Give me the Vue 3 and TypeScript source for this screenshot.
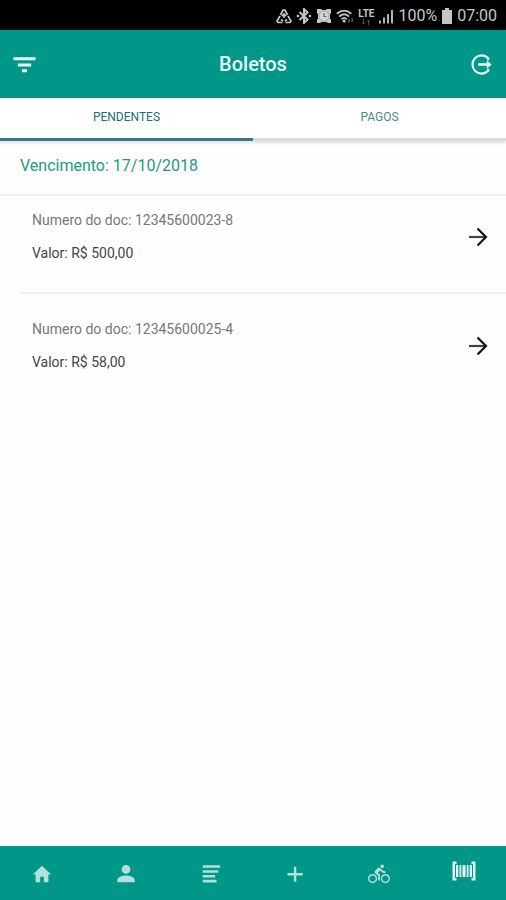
<script setup lang="ts">
import { ref } from 'vue'

interface Boleto {
  doc: string
  valor: string
}

interface NavItem {
  id: string
  label: string
  path: string
}

const activeTab = ref<'pendentes' | 'pagos'>('pendentes')
const activeNav = ref('boletos')

const boletos: Boleto[] = [
  { doc: '12345600023-8', valor: '500,00' },
  { doc: '12345600025-4', valor: '58,00' },
]

const navItems: NavItem[] = [
  { id: 'inicio', label: 'Início', path: 'M10 21v-6h4v6h5v-8.500h3L12 3 2 12.500h3V21z' },
  {
    id: 'perfil',
    label: 'Perfil',
    path: 'M12 11.800a4.800 4.800 0 1 0 0-9.600 4.800 4.800 0 0 0 0 9.600zM2.500 21v-2.500c0-3.300 6.300-4.900 9.500-4.900s9.500 1.600 9.500 4.900V21z',
  },
  { id: 'avisos', label: 'Avisos', path: 'M3 2.500h19v2.800H3zM3 7.800h17v2.800H3zM3 13.100h13.500v2.800H3zM3 18.400h15v2.800H3z' },
  { id: 'adicionar', label: 'Adicionar', path: 'M10.800 4h2.600v6.900h7v2.600h-7v7h-2.600v-7h-7v-2.600h7z' },
  {
    id: 'bicicletas',
    label: 'Bicicletas',
    path: 'M15.500 5.500c1.100 0 2-.9 2-2s-.9-2-2-2-2 .9-2 2 .9 2 2 2zM5 12c-2.800 0-5 2.200-5 5s2.200 5 5 5 5-2.200 5-5-2.200-5-5-5zm0 8.500c-1.900 0-3.500-1.600-3.500-3.500s1.600-3.500 3.500-3.500 3.500 1.600 3.500 3.500-1.600 3.500-3.500 3.500zm5.800-10l2.400-2.400.8.800c1.300 1.300 3 2.100 5.100 2.100V9c-1.500 0-2.700-.6-3.600-1.500l-1.900-1.900c-.5-.4-1-.6-1.600-.6s-1.100.2-1.400.6L7.800 8.400c-.4.4-.6.9-.6 1.400 0 .6.2 1.100.6 1.400L11 14v5h2v-6.200l-2.200-2.300zM19 12c-2.800 0-5 2.200-5 5s2.200 5 5 5 5-2.200 5-5-2.200-5-5-5zm0 8.500c-1.900 0-3.500-1.600-3.500-3.500s1.600-3.500 3.500-3.500 3.500 1.600 3.500 3.500-1.600 3.500-3.500 3.500z',
  },
  {
    id: 'boletos',
    label: 'Boletos',
    path: 'M0.500 2.500h4v2.500H3v14h1.500v2.500h-4zM19.500 2.500h4v19h-4V19H21V5h-1.500zM4 6h2.300v12H4zM7.500 6h1.800v12H7.500zM10.500 6h3v12h-3zM14.700 6h1.800v12h-1.800zM17.700 6H20v12h-2.300z',
  },
]
</script>

<template>
  <div class="app">
    <div class="status">
      <svg class="s-icon" viewBox="0 0 16 16" aria-hidden="true">
        <path d="M4.500 7L7 2h2l2.500 5M12 8l3 5-1 1.500H9.500M6.500 14.500H2L1 13l3-5M6 8l2-2 2 2M5 11.500l2 1.500M11 11.500L9 13M8 6v4" fill="none" stroke="currentColor" stroke-width="1.700" />
      </svg>
      <svg class="s-icon" viewBox="0 0 16 16" aria-hidden="true">
        <path d="M3.500 4l8 7.500L8 15V1l3.500 3.500-8 7.500" fill="none" stroke="currentColor" stroke-width="2" />
        <circle cx="2" cy="8" r="1.300" fill="currentColor" />
        <circle cx="14" cy="8" r="1.300" fill="currentColor" />
      </svg>
      <svg class="s-icon" viewBox="0 0 16 16" aria-hidden="true">
        <path d="M1 1h4l1.500 1h3L11 1h4v4l-1 1.500v4l1 1.500v3h-3l-1.500-1h-5L4 15H1v-3l1-1.500v-4L1 5z" fill="currentColor" />
        <circle cx="8" cy="8" r="5" fill="#d6d6d6" stroke="#999" stroke-width="0.700" />
        <path d="M8 5v3.500h2.500" fill="none" stroke="#666" stroke-width="1.200" />
      </svg>
      <svg class="s-wifi" viewBox="0 0 20 18" aria-hidden="true">
        <path d="M1 6q8-7 16 0M3.500 9q5.500-5 11 0M6 12q3-3 6 0" fill="none" stroke="currentColor" stroke-width="2" />
        <circle cx="9" cy="14" r="1.800" fill="currentColor" />
        <path d="M14.500 12v4M18 11v4" stroke="#555" stroke-width="1.800" />
      </svg>
      <span class="lte">
        <b>LTE</b>
        <svg class="lte-arrows" viewBox="0 0 10 6" aria-hidden="true">
          <path d="M2.500 0v5M1 3.500L2.500 5 4 3.500M7.500 6V1M6 2.500L7.500 1 9 2.500" fill="none" stroke="#555" />
        </svg>
      </span>
      <svg class="s-icon" viewBox="0 0 16 16" aria-hidden="true">
        <path d="M2 12.500v3M6 9.500v6M10 6v9.500M14 2v13.500" stroke="currentColor" stroke-width="1.800" />
      </svg>
      <span class="s-text">100%</span>
      <svg class="s-battery" viewBox="0 0 12 16" aria-hidden="true">
        <path d="M4 0h4v2h3v14H1V2h3z" fill="currentColor" />
      </svg>
      <span class="s-text">07:00</span>
    </div>

    <header class="bar">
      <button class="bar-btn" type="button" aria-label="Filtrar">
        <svg viewBox="0 0 24 24" aria-hidden="true">
          <path d="M0.500 4.500h23v3H0.500zM5 11h14v3H5zM9.500 17h5v3h-5z" fill="currentColor" />
        </svg>
      </button>
      <h1>Boletos</h1>
      <button class="bar-btn" type="button" aria-label="Sair">
        <svg viewBox="0 0 24 24" aria-hidden="true">
          <path d="M19 7.500V5.500A9.500 9.500 0 1 0 19 18.500V16.500" fill="none" stroke="currentColor" stroke-width="2.300" />
          <path d="M8.500 10.700h9V7.500l5 4.500-5 4.500v-3.200h-9z" fill="currentColor" />
        </svg>
      </button>
    </header>

    <nav class="tabs" aria-label="Situação">
      <button type="button" :class="{ active: activeTab === 'pendentes' }" @click="activeTab = 'pendentes'">PENDENTES</button>
      <button type="button" :class="{ active: activeTab === 'pagos' }" @click="activeTab = 'pagos'">PAGOS</button>
    </nav>

    <main>
      <h2>Vencimento: 17/10/2018</h2>
      <ul>
        <li v-for="boleto in boletos" :key="boleto.doc">
          <div class="info">
            <p class="doc">Numero do doc: {{ boleto.doc }}</p>
            <p class="valor">Valor: R$ {{ boleto.valor }}</p>
          </div>
          <button class="go" type="button" :aria-label="`Abrir boleto ${boleto.doc}`">
            <svg viewBox="0 0 20 20" aria-hidden="true">
              <path d="M1 10h16" stroke="#444" stroke-width="2.200" />
              <path d="M9.500 1.500L18 10l-8.500 8.500" fill="none" stroke="#111" stroke-width="2.200" />
            </svg>
          </button>
        </li>
      </ul>
    </main>

    <nav class="bottom" aria-label="Principal">
      <button
        v-for="item in navItems"
        :key="item.id"
        type="button"
        :aria-label="item.label"
        :class="{ active: activeNav === item.id }"
        @click="activeNav = item.id"
      >
        <svg viewBox="0 0 24 24" aria-hidden="true"><path :d="item.path" fill="currentColor" /></svg>
      </button>
    </nav>
  </div>
</template>

<style>
body {
  margin: 0;
  background: #fefefe;
}
</style>

<style scoped>
.app {
  display: flex;
  flex-direction: column;
  min-height: 100vh;
  font-family: Roboto, "Liberation Sans", sans-serif;
}
button {
  border: 0;
  padding: 0;
  background: none;
  font: inherit;
  color: inherit;
  cursor: pointer;
}
svg {
  display: block;
}
h1,
h2,
p,
ul {
  margin: 0;
  padding: 0;
}
.status {
  display: flex;
  align-items: center;
  justify-content: flex-end;
  gap: 4px;
  box-sizing: border-box;
  height: 30px;
  padding: 2px 9px 0;
  background: #000;
  color: #c6c6c6;
}
.s-icon {
  width: 16px;
  height: 16px;
}
.s-wifi {
  width: 18px;
  height: 17px;
}
.s-battery {
  width: 12px;
  height: 16px;
}
.s-text {
  font-size: 16px;
  line-height: 20px;
}
.lte {
  display: flex;
  flex-direction: column;
  align-items: center;
  font-size: 10px;
  line-height: 11px;
}
.lte-arrows {
  width: 10px;
  height: 6px;
}
.bar {
  display: flex;
  align-items: center;
  justify-content: space-between;
  height: 68px;
  padding: 0 13px;
  background: #009688;
  color: #e8fffc;
}
.bar-btn svg {
  width: 23px;
  height: 23px;
}
h1 {
  font-size: 20px;
  line-height: 24px;
  font-weight: 500;
}
.tabs {
  display: flex;
  height: 43px;
  background: #fff;
  box-shadow: 0 2px 3px rgba(0, 0, 0, 0.12);
}
.tabs button {
  flex: 1;
  padding-bottom: 3px;
  border-bottom: 3px solid #dcdcdc;
  color: #4d8a88;
  font-size: 12px;
  line-height: 16px;
}
.tabs button.active {
  border-bottom-color: #38788a;
  color: #206f70;
}
main {
  flex: 1;
}
h2 {
  padding: 14px 20px 17px;
  border-bottom: 2px solid #f0f0f0;
  color: #1b9c80;
  font-size: 16px;
  line-height: 22px;
  font-weight: 400;
}
ul {
  list-style: none;
}
li {
  display: flex;
  align-items: center;
  justify-content: space-between;
  margin-left: 20px;
  padding: 23px 18px 28px 12px;
}
li:first-child {
  padding-top: 12px;
  padding-bottom: 27px;
  border-bottom: 2px solid #f0f0f0;
}
.info {
  display: flex;
  flex-direction: column;
  gap: 9px;
  font-size: 14px;
  line-height: 24px;
}
.doc {
  color: #777;
}
.valor {
  color: #444;
}
.go svg {
  width: 20px;
  height: 20px;
}
.bottom {
  display: flex;
  height: 54px;
  background: #009688;
  color: #b2e0db;
}
.bottom button {
  display: flex;
  flex: 1;
  align-items: center;
  justify-content: center;
  padding-top: 2px;
}
.bottom svg {
  width: 22px;
  height: 22px;
}
.bottom .active {
  padding: 0 0 4px;
  color: #e0f7f4;
}
.bottom .active svg {
  width: 24px;
  height: 24px;
}
</style>
